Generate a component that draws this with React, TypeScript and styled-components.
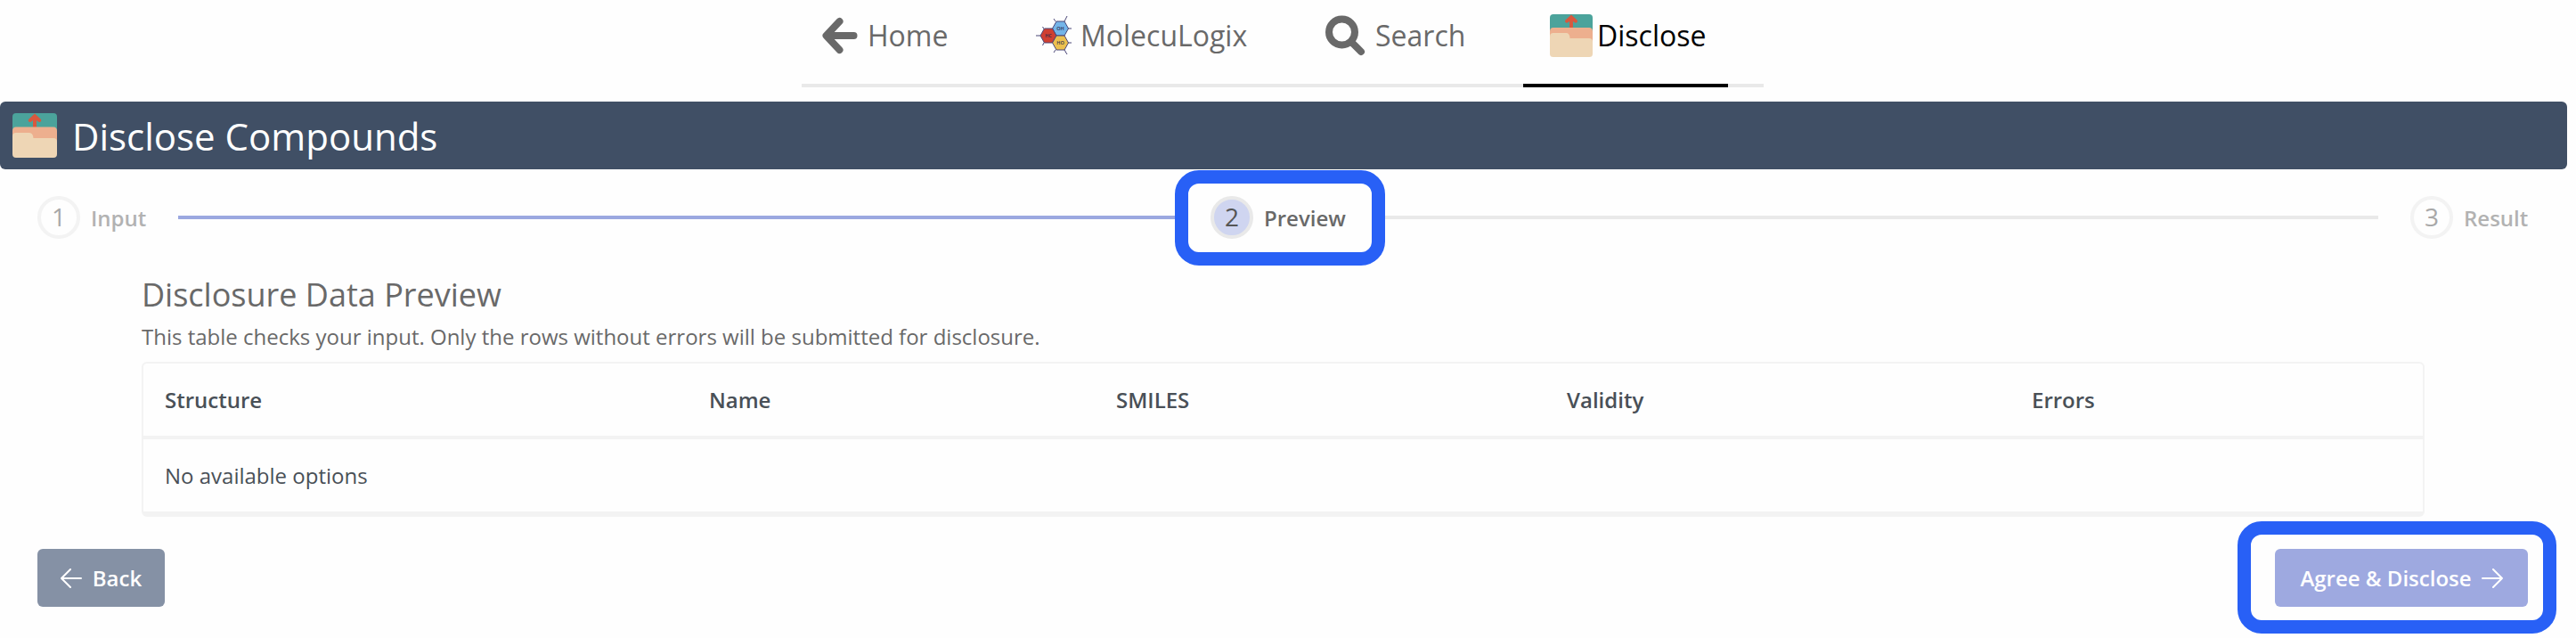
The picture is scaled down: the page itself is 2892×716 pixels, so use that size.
import React from "react";
import styled, { createGlobalStyle } from "styled-components";

const Global = createGlobalStyle`
  * { box-sizing: border-box; }
  body { margin: 0; background: #fefefe; font-family: "Open Sans", "Liberation Sans", sans-serif; color: #696969; }
`;

const Page = styled.div`
  width: 2892px;
  height: 716px;
  padding-right: 10px;
  display: flex;
  flex-direction: column;
  overflow: hidden;
`;

const Nav = styled.nav`
  width: 1080px;
  height: 98px;
  margin-left: 900px;
  display: flex;
  border-bottom: 4px solid #e9e9e9;
`;

const Tab = styled.a<{ $active?: boolean; $width: number; $pad: number; $gap: number }>`
  flex: none;
  display: flex;
  align-items: center;
  width: ${(p) => p.$width}px;
  height: 98px;
  padding: 0 0 14px ${(p) => p.$pad}px;
  gap: ${(p) => p.$gap}px;
  font-size: 32px;
  line-height: 44px;
  white-space: nowrap;
  color: ${(p) => (p.$active ? "#000" : "#696969")};
  border-bottom: 4px solid ${(p) => (p.$active ? "#000" : "transparent")};
  svg { flex: none; }
`;

const Banner = styled.header`
  flex: none;
  height: 76px;
  margin-top: 16px;
  padding-left: 14px;
  display: flex;
  align-items: center;
  gap: 17px;
  border-radius: 6px;
  background: #404f65;
  color: #fff;
`;

const BannerTitle = styled.h1`
  margin: 0;
  padding-top: 2px;
  font-size: 42px;
  font-weight: 400;
  line-height: 56px;
`;

const Steps = styled.div`
  flex: none;
  height: 108px;
  padding: 0 42px;
  display: flex;
  align-items: center;
  gap: 36px;
`;

const Step = styled.div<{ $width: number; $dim?: boolean }>`
  position: relative;
  flex: none;
  width: ${(p) => p.$width}px;
  display: flex;
  align-items: center;
  gap: 12px;
  font-size: 24px;
  font-weight: 600;
  line-height: 35px;
  opacity: ${(p) => (p.$dim ? 0.5 : 1)};
`;

const StepNumber = styled.span<{ $current?: boolean }>`
  flex: none;
  width: 48px;
  height: 48px;
  border: 4px solid #e9e9e9;
  border-radius: 50%;
  background: ${(p) => (p.$current ? "#cfd5f0" : "transparent")};
  font-size: 28px;
  font-weight: 400;
  line-height: 39px;
  text-align: center;
  color: #555;
`;

const Track = styled.div<{ $done?: boolean }>`
  flex: 1;
  height: 4px;
  background: ${(p) => (p.$done ? "#9ba8e0" : "#e9e9e9")};
`;

const Highlight = styled.span<{ $inset: string }>`
  position: absolute;
  inset: ${(p) => p.$inset};
  border: 15px solid #2860f6;
  border-radius: 27px;
`;

const Content = styled.main`
  flex: none;
  width: 2563px;
  margin-left: 159px;
  padding-top: 9px;
`;

const Title = styled.h2`
  margin: 0;
  font-size: 36px;
  font-weight: 400;
  line-height: 48px;
`;

const Description = styled.p`
  margin: 5px 0 11px;
  font-size: 24px;
  line-height: 35px;
`;

const Table = styled.div`
  height: 174px;
  border: 2px solid #f3f3f3;
  border-bottom-width: 6px;
  border-radius: 6px;
  color: #495057;
  font-size: 24px;
  line-height: 34px;
`;

const Row = styled.div<{ $head?: boolean }>`
  display: grid;
  grid-template-columns: 611px 457px 506px 522px 1fr;
  align-items: center;
  height: ${(p) => (p.$head ? 85 : 81)}px;
  padding-left: 24px;
  font-weight: ${(p) => (p.$head ? 600 : 400)};
  border-bottom: ${(p) => (p.$head ? "4px solid #f3f3f3" : "none")};
`;

const Actions = styled.footer`
  display: flex;
  justify-content: space-between;
  margin: 36px 44px 0 42px;
`;

const Slot = styled.div`
  position: relative;
`;

const Button = styled.button<{ $width: number; $primary?: boolean }>`
  width: ${(p) => p.$width}px;
  height: 65px;
  padding: 0;
  display: flex;
  align-items: center;
  justify-content: center;
  gap: ${(p) => (p.$primary ? 11 : 12)}px;
  border: 0;
  border-radius: 6px;
  background: ${(p) => (p.$primary ? "#9ea9e0" : "#8591a5")};
  color: #fff;
  font: 600 24px/34px "Open Sans", sans-serif;
`;

const FolderIcon = ({ width, height }: { width: number; height: number }) => (
  <svg width={width} height={height} viewBox="0 0 50 50" preserveAspectRatio="none">
    <rect width="50" height="40" rx="4" fill="#4ba39b" />
    <path d="M25 .5 32 7Q33 9 31 10Q29.500 10.500 27 8V18H23V8Q20.500 10.500 19 10Q17 9 18 7Z" fill="#d8583e" />
    <path d="M0 20Q0 15.500 4 15.500H46Q50 15.500 50 20V40H0Z" fill="#edaf8e" />
    <path d="M0 26Q0 22 4 22H19Q23 22 23.500 28H46Q50 28 50 32V46Q50 50 46 50H4Q0 50 0 46Z" fill="#eed6b5" />
  </svg>
);

const HomeArrow = () => (
  <svg width="40" height="42" viewBox="0 0 40 42" fill="none" stroke="#696969" strokeWidth="8" strokeLinecap="round" strokeLinejoin="round">
    <path d="M19.500 5 4.500 21 19.500 37M5 21H35.500" />
  </svg>
);

const SearchGlass = () => (
  <svg width="45" height="46" viewBox="0 0 45 46" fill="none" stroke="#696969" strokeWidth="8">
    <circle cx="18.500" cy="19" r="14.500" />
    <path d="m30 31 10 10" strokeLinecap="round" />
  </svg>
);

const Molecule = () => (
  <svg width="40" height="46" viewBox="0 0 40 46" stroke="#4a4677" strokeWidth="1">
    <path d="M0 23H5M9 15.500 7.500 13M9 31 7.500 34M22 7 20 4M32 7 35 1M36 15H40M36 31H40M22 39 20 42M32 39 35 44" />
    <path d="M18.500 15 23 7H32L36.500 15 32 23H23Z" fill="#74b4e8" />
    <path d="M5 23 9.500 15H18.500L23 23 18.500 31H9.500Z" fill="#cf3f31" />
    <path d="M18.500 31 23 23H32L36.500 31 32 39H23Z" fill="#ecc04f" />
    <g stroke="none" fill="#2d2b4d" fontSize="5.500" fontWeight="600" textAnchor="middle">
      <text x="27.500" y="17">OH</text>
      <text x="14" y="25">HC</text>
      <text x="27.500" y="33">HO</text>
    </g>
  </svg>
);

const ThinArrow = ({ right }: { right?: boolean }) => (
  <svg width="24" height="22" viewBox="0 0 24 22" fill="none" stroke="#fff" strokeWidth="2" strokeLinecap="round" strokeLinejoin="round">
    <path d={right ? "M1 11H23M13 1 23 11 13 21" : "M23 11H1M11 1 1 11 11 21"} />
  </svg>
);

export default function App() {
  return (
    <Page>
      <Global />
      <Nav>
        <Tab $width={240} $pad={23} $gap={11}><HomeArrow />Home</Tab>
        <Tab $width={325} $pad={23} $gap={10}><Molecule />MolecuLogix</Tab>
        <Tab $width={245} $pad={23} $gap={11}><SearchGlass />Search</Tab>
        <Tab $active $width={230} $pad={30} $gap={5}><FolderIcon width={48} height={48} />Disclose</Tab>
      </Nav>
      <Banner>
        <FolderIcon width={50} height={50} />
        <BannerTitle>Disclose Compounds</BannerTitle>
      </Banner>
      <Steps>
        <Step $width={122} $dim><StepNumber>1</StepNumber>Input</Step>
        <Track $done />
        <Step $width={152}>
          <StepNumber $current>2</StepNumber>Preview
          <Highlight $inset="-29px -44px -30px -40px" />
        </Step>
        <Track />
        <Step $width={134} $dim><StepNumber>3</StepNumber>Result</Step>
      </Steps>
      <Content>
        <Title>Disclosure Data Preview</Title>
        <Description>This table checks your input. Only the rows without errors will be submitted for disclosure.</Description>
        <Table>
          <Row $head>
            <span>Structure</span><span>Name</span><span>SMILES</span><span>Validity</span><span>Errors</span>
          </Row>
          <Row><span>No available options</span></Row>
        </Table>
      </Content>
      <Actions>
        <Button $width={143}><ThinArrow />Back</Button>
        <Slot>
          <Button $width={284} $primary>Agree &amp; Disclose<ThinArrow right /></Button>
          <Highlight $inset="-31px -32px -30px -42px" />
        </Slot>
      </Actions>
    </Page>
  );
}
